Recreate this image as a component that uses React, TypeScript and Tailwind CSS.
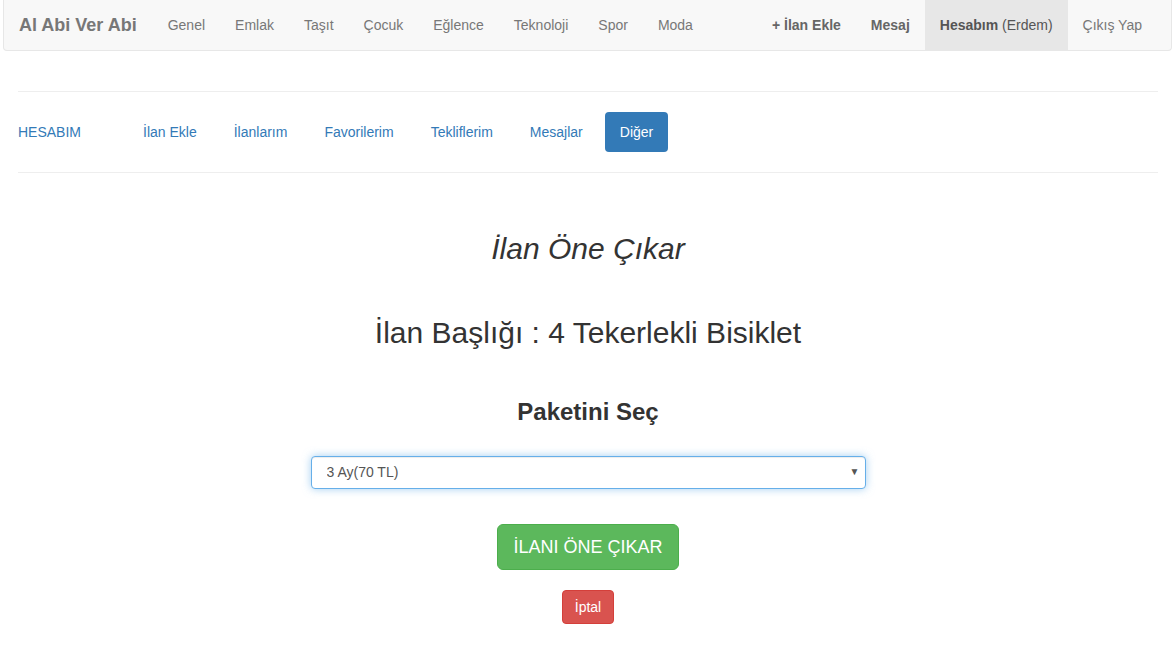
import { FunctionComponent } from "react";

const navLinks = ["Genel", "Emlak", "Taşıt", "Çocuk", "Eğlence", "Teknoloji", "Spor", "Moda"];
const subLinks = ["İlan Ekle", "İlanlarım", "Favorilerim", "Tekliflerim", "Mesajlar"];

const App: FunctionComponent = () => {
  return (
    <div className="w-full min-h-[660px] bg-white text-[14px] text-[#333] font-['Liberation_Sans',Arial,sans-serif]">
      <nav className="ml-[3px] mr-[2px] h-[51px] bg-[#f8f8f8] border border-t-0 border-[#e7e7e7] rounded-b-[4px] flex flex-row items-stretch justify-between">
        <div className="flex flex-row items-stretch">
          <a className="px-[15px] flex items-center text-[18px] font-bold text-[#777]">Al Abi Ver Abi</a>
          <div className="flex flex-row items-stretch pl-[1px]">
            {navLinks.map((l) => (
              <a key={l} className="px-[15px] flex items-center text-[#777]">
                {l}
              </a>
            ))}
          </div>
        </div>
        <div className="flex flex-row items-stretch pr-[14px]">
          <a className="px-[15px] flex items-center font-bold text-[#666]">+ İlan Ekle</a>
          <a className="px-[15px] flex items-center font-bold text-[#666]">Mesaj</a>
          <a className="px-[15px] flex items-center bg-[#e7e7e7] text-[#555]">
            <span className="font-bold">Hesabım</span>&nbsp;(Erdem)
          </a>
          <a className="px-[15px] flex items-center text-[#777]">Çıkış Yap</a>
        </div>
      </nav>

      <div className="ml-[18px] mr-[16px]">
        <div className="mt-[40px] border-t border-[#eee]" />
        <div className="flex flex-row items-center h-[80px]">
          <a className="w-[110px] text-[#337ab7]">HESABIM</a>
          <div className="flex flex-row items-center gap-[7px]">
            {subLinks.map((l) => (
              <a key={l} className="px-[15px] py-[10px] leading-[20px] rounded-[4px] text-[#337ab7]">
                {l}
              </a>
            ))}
            <a className="px-[15px] py-[10px] leading-[20px] rounded-[4px] bg-[#337ab7] text-white">Diğer</a>
          </div>
        </div>
        <div className="border-t border-[#eee]" />

        <div className="flex flex-col items-center">
          <h2 className="mt-[59px] text-[30px] leading-[33px] italic text-[#333]">İlan Öne Çıkar</h2>
          <h2 className="mt-[51px] text-[30px] leading-[33px] text-[#333]">İlan Başlığı : 4 Tekerlekli Bisiklet</h2>
          <h3 className="mt-[50px] text-[24px] leading-[26px] font-bold text-[#333]">Paketini Seç</h3>
          <div className="mt-[31px] relative w-[555px] h-[33px]">
            <select className="w-full h-full appearance-none bg-white border border-[#66afe9] rounded-[4px] pl-[15px] pr-[24px] text-[14px] text-[#555] shadow-[inset_0_1px_1px_rgba(0,0,0,0.075),0_0_8px_rgba(102,175,233,0.6)] outline-none">
              <option>3 Ay(70 TL)</option>
            </select>
            <span className="absolute right-[6px] top-[8px] text-[10px] text-[#555] pointer-events-none">▼</span>
          </div>
          <button className="mt-[35px] bg-[#5cb85c] border border-[#4cae4c] rounded-[6px] px-[15px] py-[10px] text-[18px] leading-[24px] text-white">
            İLANI ÖNE ÇIKAR
          </button>
          <button className="mt-[20px] bg-[#d9534f] border border-[#d43f3a] rounded-[4px] px-[12px] py-[6px] text-[14px] leading-[20px] text-white">
            İptal
          </button>
        </div>
      </div>
    </div>
  );
};

export default App;
